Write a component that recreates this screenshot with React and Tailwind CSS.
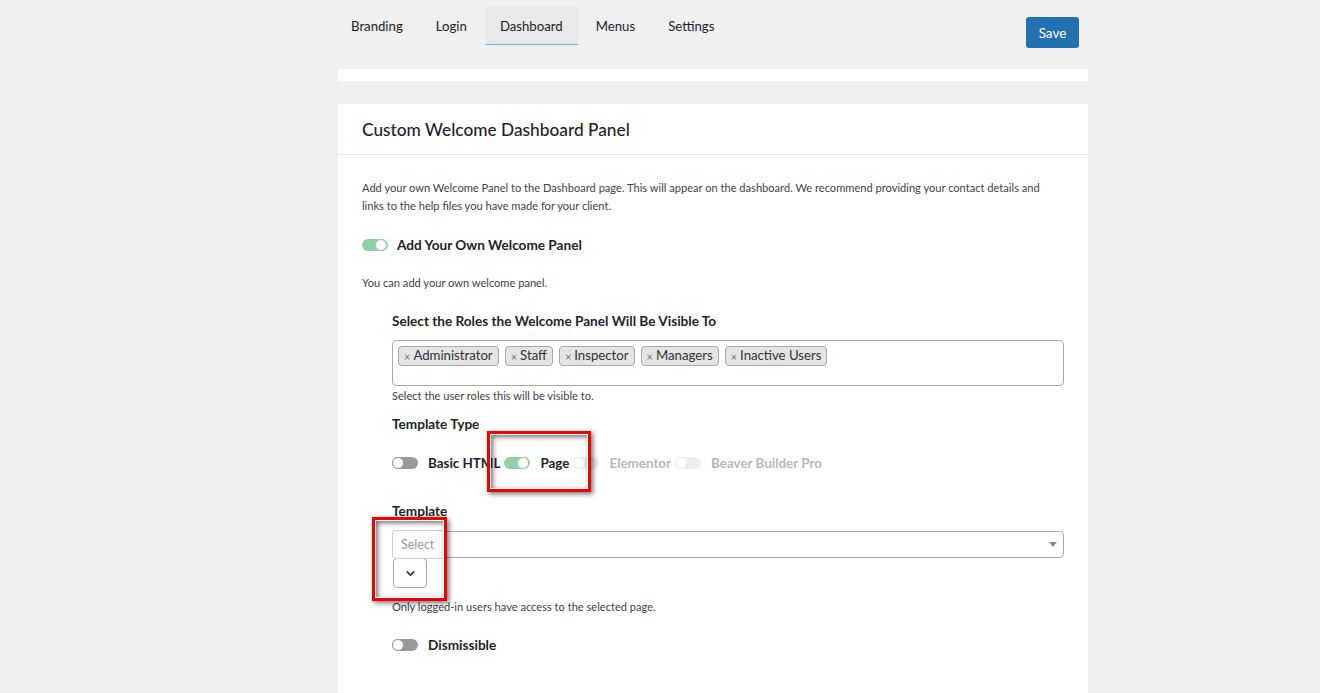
import React from "react";

const F = { fontFamily: 'Lato, "Open Sans", Arial, sans-serif' };

function Toggle({ state }) {
  if (state === "on") {
    return (
      <span className="relative inline-flex h-[12px] w-[26px] shrink-0 items-center rounded-full bg-[#8fd1a6]">
        <span className="absolute right-[1px] h-[12px] w-[12px] rounded-full border border-[#8fd1a6] bg-white" />
      </span>
    );
  }
  if (state === "off") {
    return (
      <span className="relative inline-flex h-[12px] w-[26px] shrink-0 items-center rounded-full bg-[#9a9a9a]">
        <span className="absolute left-[0px] h-[12px] w-[12px] rounded-full border border-[#9a9a9a] bg-white" />
      </span>
    );
  }
  return (
    <span className="relative inline-flex h-[12px] w-[26px] shrink-0 items-center rounded-full bg-[#ededed]">
      <span className="absolute left-[0px] h-[12px] w-[12px] rounded-full border border-[#ededed] bg-white" />
    </span>
  );
}

function Tag({ children }) {
  return (
    <span className="flex h-[20px] items-center gap-[3px] rounded-[4px] border border-[#aaaaaa] bg-[#e4e4e4] px-[5px] text-[13.2px] leading-none text-[#333]">
      <span className="text-[11px] text-[#777]">×</span>
      <span>{children}</span>
    </span>
  );
}

function Option({ state, label, muted }) {
  return (
    <span className="mr-[4px] flex items-center">
      <Toggle state={state} />
      <span className={"ml-[10px] " + (muted ? "text-[#b8b8b8]" : "text-[#1d2327]")}>{label}</span>
    </span>
  );
}

function RedBox({ className }) {
  return (
    <div
      className={
        "pointer-events-none absolute border-[3px] border-[#f20000] shadow-[2px_2px_5px_rgba(0,0,0,0.55)] " +
        className
      }
    >
      <div className="h-full w-full border border-white shadow-[inset_2px_2px_5px_rgba(0,0,0,0.55)]" />
    </div>
  );
}

export default function App() {
  return (
    <div className="relative min-h-[693px] w-full overflow-hidden bg-[#f0f0f1]" style={F}>
      <div className="ml-[338px] w-[750px]">
        {/* top bar */}
        <div className="flex h-[69px] items-start justify-between">
          <div className="ml-[-2px] mt-[7px] flex gap-[3px] text-[13.2px] text-[#1d2327]">
            <div className="flex h-[37px] items-center px-[15px] pt-[2px]">Branding</div>
            <div className="flex h-[37px] items-center px-[15px] pt-[2px]">Login</div>
            <div className="flex h-[38px] items-center border-b-[1.5px] border-[#72b5e0] bg-[#e9e9ea] px-[15px] pt-[2px]">
              Dashboard
            </div>
            <div className="flex h-[37px] items-center px-[15px] pt-[2px]">Menus</div>
            <div className="flex h-[37px] items-center px-[15px] pt-[2px]">Settings</div>
          </div>
          <button className="mr-[9px] mt-[17px] flex h-[31px] w-[53px] items-center justify-center rounded-[3px] bg-[#2271b1] pt-[2px] text-[13.5px] text-white">
            Save
          </button>
        </div>
        <div className="h-[12px] bg-white" />
        <div className="h-[23px]" />

        {/* panel */}
        <div className="min-h-[600px] bg-white">
          <div className="flex h-[51px] items-center border-b border-[#e5e5e5] px-[24px] pt-[2px] text-[17.3px] font-medium text-[#1d2327]">
            Custom Welcome Dashboard Panel
          </div>
          <div className="px-[24px] pb-[40px]">
            <p className="mt-[24px] w-[700px] text-[11.1px] leading-[18px] text-[#3c434a]">
              Add your own Welcome Panel to the Dashboard page. This will appear on the dashboard. We recommend providing your contact details and links to the help files you have made for your client.
            </p>
            <div className="mt-[20px] flex h-[20px] items-center gap-[9px]">
              <Toggle state="on" />
              <span className="text-[13.6px] font-bold text-[#1d2327]">Add Your Own Welcome Panel</span>
            </div>
            <p className="mt-[19px] text-[11.1px] leading-[18px] text-[#3c434a]">You can add your own welcome panel.</p>

            <div className="ml-[30px]">
              <div className="mt-[19px] h-[20px] text-[13.6px] font-bold leading-[20px] text-[#1d2327]">
                Select the Roles the Welcome Panel Will Be Visible To
              </div>
              <div className="mt-[9px] flex h-[46px] flex-wrap content-start gap-[6px] rounded-[4px] border border-[#aaaaaa] px-[5px] pt-[5px]">
                <Tag>Administrator</Tag>
                <Tag>Staff</Tag>
                <Tag>Inspector</Tag>
                <Tag>Managers</Tag>
                <Tag>Inactive Users</Tag>
              </div>
              <p className="mt-[2px] text-[11.1px] leading-[16px] text-[#3c434a]">Select the user roles this will be visible to.</p>

              <div className="mt-[10px] h-[20px] text-[13.6px] font-bold leading-[20px] text-[#1d2327]">Template Type</div>
              <div className="mt-[19px] flex h-[20px] items-center text-[13.4px] font-bold">
                <Option state="off" label="Basic HTML" />
                <Option state="on" label="Page" />
                <Option state="disabled" label="Elementor" muted />
                <Option state="disabled" label="Beaver Builder Pro" muted />
              </div>

              <div className="mt-[28px] h-[20px] text-[13.6px] font-bold leading-[20px] text-[#1d2327]">Template</div>
              <div className="mt-[10px]">
                <div className="relative flex h-[27px] items-center rounded-[4px] border border-[#a7a7a7]">
                  <div className="ml-[-1px] flex h-[29px] w-[54px] items-center rounded-[4px] border border-[#cfcfcf] bg-white pl-[8px] pt-[2px] text-[12.5px] text-[#999]">
                    Select
                  </div>
                  <span className="absolute right-[6px] top-[10px] h-0 w-0 border-x-[4px] border-t-[5px] border-x-transparent border-t-[#888]" />
                </div>
                <div className="ml-[1px] flex h-[30px] w-[34px] items-center justify-center rounded-[4px] border border-[#a7a7a7] bg-white">
                  <svg width="13" height="13" viewBox="0 0 24 24" fill="none" stroke="#333" strokeWidth="3" strokeLinecap="round" strokeLinejoin="round">
                    <path d="M6 9l6 6 6-6" />
                  </svg>
                </div>
              </div>
              <p className="mt-[11px] text-[11.1px] leading-[16px] text-[#3c434a]">Only logged-in users have access to the selected page.</p>

              <div className="mt-[20px] flex h-[20px] items-center gap-[10px]">
                <Toggle state="off" />
                <span className="text-[13.6px] font-bold text-[#1d2327]">Dismissible</span>
              </div>
            </div>
          </div>
        </div>
      </div>

      <RedBox className="left-[487px] top-[431px] h-[61px] w-[104px]" />
      <RedBox className="left-[372px] top-[517px] h-[84px] w-[75px]" />
    </div>
  );
}
